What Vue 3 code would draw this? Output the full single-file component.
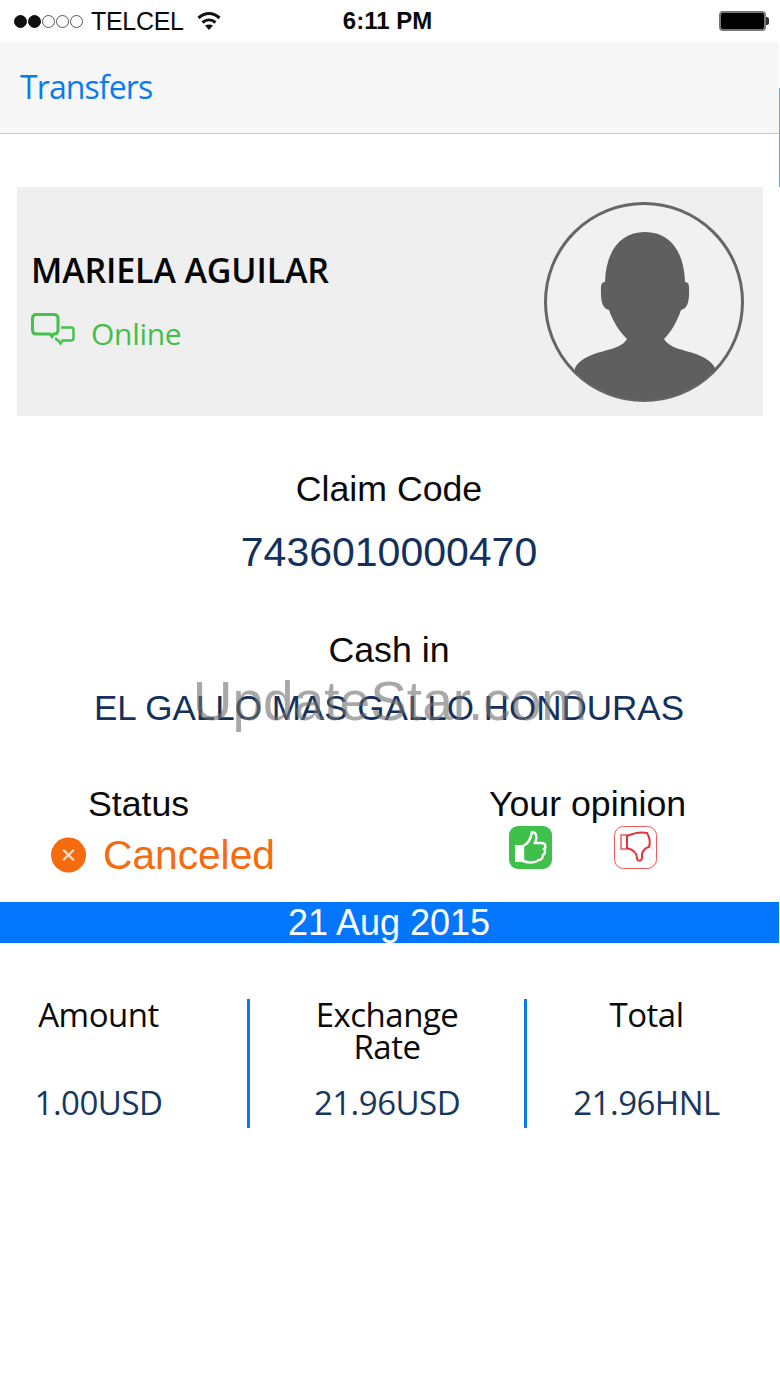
<template>
  <div class="screen">
    <div class="status-bar">
      <div class="carrier">
        <span class="dots">
          <i class="dot on"></i><i class="dot on"></i><i class="dot"></i><i class="dot"></i><i class="dot"></i>
        </span>
        <span class="carrier-name">TELCEL</span>
        <svg class="wifi" viewBox="0 0 24 19" width="24" height="19">
          <path d="M1.500 7C8 1 16 1 22.500 7" fill="none" stroke="#111" stroke-width="3.200" />
          <path d="M5.500 11.500C9.500 8 14.500 8 18.500 11.500" fill="none" stroke="#111" stroke-width="3" />
          <path d="M8 14.500L12 19L16 14.500C13.500 13 10.500 13 8 14.500Z" fill="#111" />
        </svg>
      </div>
      <div class="clock">6:11 PM</div>
      <div class="battery"><span class="battery-body"></span><span class="battery-tip"></span></div>
    </div>

    <nav class="nav-bar"><span class="nav-link">Transfers</span></nav>
    <div class="edge-mark"></div>

    <section class="person-card">
      <div class="person-info">
        <div class="person-name">MARIELA AGUILAR</div>
        <div class="person-state">
          <svg class="chat-icon" viewBox="0 0 44 34" width="44" height="34">
            <path d="M5.500 2.500H23Q27 2.500 27 6.500V18Q27 22 23 22H22.500L21 24.500L19 22H5.500Q1.500 22 1.500 18V6.500Q1.500 2.500 5.500 2.500Z" fill="none" stroke="#43c24e" stroke-width="3" />
            <path d="M30 15.500H40Q42.500 15.500 42.500 18V26Q42.500 28.500 40 28.500H31.500L29.500 31.500L27.500 28.500Q25 28.500 25 25.500" fill="none" stroke="#43c24e" stroke-width="2.400" />
          </svg>
          <span>Online</span>
        </div>
      </div>
      <svg class="avatar" viewBox="0 0 200 200" width="200" height="200">
        <defs>
          <clipPath id="avatar-clip"><circle cx="100" cy="100" r="98" /></clipPath>
        </defs>
        <circle cx="100" cy="100" r="98.500" fill="#f1f1f1" stroke="#666" stroke-width="3" />
        <path clip-path="url(#avatar-clip)" fill="#5f5f5f" d="M101 30C77 30 62 48 61 80C56 80 57 86 57 92C57 100 59 107 65 108C69 120 76 130 83 137C78 146 62 148 50 152C40 156 34 160 31 166V200H171V166C168 160 162 156 152 152C140 148 125 146 120 137C127 130 133 120 137 108C143 107 145 100 145 92C145 86 146 80 141 80C140 48 125 30 101 30Z" />
      </svg>
    </section>

    <section class="claim">
      <div class="label">Claim Code</div>
      <div class="code">7436010000470</div>
    </section>

    <section class="cash-in">
      <div class="label">Cash in</div>
      <div class="agent">EL GALLO MAS GALLO HONDURAS</div>
      <div class="watermark">UpdateStar.com</div>
    </section>

    <section class="state-row">
      <div class="state-col">
        <div class="label">Status</div>
        <div class="state-value">
          <svg viewBox="0 0 36 36" width="35" height="36">
            <circle cx="18" cy="18" r="18" fill="#f66b0e" />
            <path d="M12.500 12.500L23.500 23.500M23.500 12.500L12.500 23.500" stroke="#fbe3d2" stroke-width="2.200" />
          </svg>
          <span>Canceled</span>
        </div>
      </div>
      <div class="opinion-col">
        <div class="label">Your opinion</div>
        <div class="opinion-icons">
          <svg viewBox="0 0 43 43" width="43" height="43">
            <rect width="43" height="43" rx="9" fill="#3fc04a" />
            <path d="M6 19H14V36H6Z" fill="#fff" />
            <path d="M14 20C19 18 22 12 23 6C27 6 28 10 27 14L26 17H33C37 17 37 22 35 23C37 25 36 28 34 29C34 32 32 34 30 34C26 37 20 37 14 35Z" fill="#3fc04a" stroke="#fff" stroke-width="2.400" />
          </svg>
          <svg viewBox="0 0 43 43" width="43" height="43">
            <rect x="0.500" y="0.500" width="42" height="42" rx="9" fill="#fff" stroke="#ee5a60" />
            <path d="M7 9H13V23H7Z" fill="#fff" stroke="#ee5a60" stroke-width="1.500" />
            <path d="M13 10C20 7 28 6 33 7C36 12 36 18 35 21C31 22 29 24 28 28V32C27 36 23 35 23 32C23 27 20 24 13 22Z" fill="#fff" stroke="#e5323a" stroke-width="2" />
          </svg>
        </div>
      </div>
    </section>

    <div class="date-bar">21 Aug 2015</div>

    <section class="totals">
      <div class="total-col amount">
        <div class="total-head">Amount</div>
        <div class="total-value">1.00USD</div>
      </div>
      <div class="total-col bordered">
        <div class="total-head">Exchange<br />Rate</div>
        <div class="total-value">21.96USD</div>
      </div>
      <div class="total-col sum">
        <div class="total-head">Total</div>
        <div class="total-value">21.96HNL</div>
      </div>
    </section>
  </div>
</template>

<script setup>
</script>

<style>
body {
  background: #fff;
}
</style>

<style scoped>
.screen {
  position: relative;
  width: 780px;
  height: 1387px;
  overflow: hidden;
  background: #fff;
  font-family: "Liberation Sans", Arial, sans-serif;
  color: #0a0a0a;
}

.status-bar {
  height: 42px;
  display: grid;
  grid-template-columns: 1fr auto 1fr;
  align-items: center;
  padding: 0 11px 0 14px;
  box-sizing: border-box;
}

.carrier {
  display: flex;
  align-items: center;
  font-size: 25px;
  letter-spacing: -0.3px;
}

.dots {
  display: flex;
  gap: 1px;
  margin-right: 8px;
}

.dot {
  width: 13px;
  height: 13px;
  border: 1px solid #555;
  border-radius: 50%;
  box-sizing: border-box;
}

.dot.on {
  background: #111;
  border-color: #111;
}

.wifi {
  margin-left: 13px;
  margin-top: -1px;
}

.clock {
  font-size: 24px;
  font-weight: 700;
  padding-right: 8px;
}

.battery {
  display: flex;
  align-items: center;
  justify-content: flex-end;
}

.battery-body {
  width: 47px;
  height: 20px;
  box-sizing: border-box;
  background: #000;
  border: 2px solid #777;
  border-radius: 4px;
}

.battery-tip {
  width: 3px;
  height: 8px;
  background: #333;
  border-radius: 0 2px 2px 0;
}

.nav-bar {
  height: 92px;
  width: 779px;
  box-sizing: border-box;
  background: #f7f7f8;
  border-bottom: 1px solid #c8c8c8;
  padding: 23px 0 0 20px;
}

.nav-link {
  font-family: "Open Sans", sans-serif;
  font-size: 32px;
  letter-spacing: -0.9px;
  color: #0a7cf0;
}

.edge-mark {
  position: absolute;
  right: 0;
  top: 88px;
  width: 1px;
  height: 99px;
  background: #5bb0dc;
}

.person-card {
  margin: 53px 17px 0;
  height: 229px;
  background: #efefef;
  display: flex;
  justify-content: space-between;
  align-items: flex-start;
  padding: 15px 19px 0 14px;
  box-sizing: border-box;
}

.person-name {
  font-family: "Open Sans", sans-serif;
  font-size: 34px;
  font-weight: 600;
  letter-spacing: -0.15px;
  line-height: 44px;
  margin-top: 46px;
  color: #050505;
}

.person-state {
  display: flex;
  align-items: center;
  gap: 16px;
  margin-top: 21px;
  font-family: "Open Sans", sans-serif;
  font-size: 30px;
  letter-spacing: -0.3px;
  color: #41bf4b;
}

.chat-icon {
  margin-top: -10px;
}

.avatar {
  flex: none;
}

.label {
  font-size: 35.700px;
  line-height: 40px;
}

.claim {
  margin-top: 53px;
  padding-right: 2px;
  text-align: center;
}

.code {
  margin-top: 20px;
  font-size: 41px;
  line-height: 46px;
  color: #14305c;
}

.cash-in {
  position: relative;
  margin-top: 55px;
  padding-right: 2px;
  text-align: center;
}

.agent {
  margin-top: 18px;
  font-size: 35px;
  line-height: 40px;
  color: #14305c;
}

.watermark {
  position: absolute;
  left: 0;
  right: 0;
  top: 39px;
  font-size: 55px;
  line-height: 64px;
  color: rgba(110, 110, 110, 0.6);
}

.state-row {
  display: flex;
  margin-top: 56px;
}

.state-col {
  width: 489px;
  box-sizing: border-box;
  padding-left: 51px;
}

.state-col .label {
  padding-left: 37px;
}

.state-value {
  display: flex;
  align-items: center;
  gap: 17px;
  margin-top: 7px;
  font-size: 40.700px;
  line-height: 48px;
  color: #f66b0e;
}

.opinion-icons {
  display: flex;
  gap: 62px;
  padding-left: 20px;
  margin-top: 2px;
}

.date-bar {
  width: 779px;
  height: 41px;
  margin-top: 23px;
  padding-right: 1px;
  box-sizing: border-box;
  background: #0277fd;
  color: #fff;
  text-align: center;
  font-size: 36px;
  line-height: 42px;
}

.totals {
  display: grid;
  grid-template-columns: 247px 280px 1fr;
  margin-top: 56px;
  font-family: "Open Sans", sans-serif;
}

.total-col {
  height: 129px;
  text-align: center;
}

.amount {
  padding-right: 50px;
}

.sum {
  padding-right: 14px;
}

.total-head {
  font-size: 33px;
  line-height: 32px;
  letter-spacing: -0.5px;
  height: 84px;
  color: #0a0a0a;
}

.total-value {
  font-size: 33px;
  line-height: 40px;
  letter-spacing: -0.5px;
  color: #17375e;
}

.bordered {
  border-left: 3px solid #0c79ee;
  border-right: 3px solid #0c79ee;
}
</style>
